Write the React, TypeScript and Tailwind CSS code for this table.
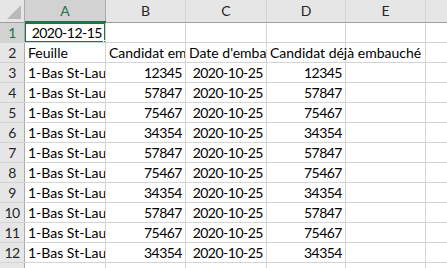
import React from 'react';

const cols = [
  { key: 'A', w: 'w-[81px]' },
  { key: 'B', w: 'w-[80px]' },
  { key: 'C', w: 'w-[81px]' },
  { key: 'D', w: 'w-[79px]' },
  { key: 'E', w: 'w-[80px]' },
];

const ids = [12345, 57847, 75467, 34354, 57847, 75467, 34354, 57847, 75467, 34354];

type Cell = { text: string; align?: 'left' | 'right'; overflow?: boolean };

const rows: Cell[][] = [
  [{ text: '2020-12-15', align: 'right' }, { text: '' }, { text: '' }, { text: '' }, { text: '' }],
  [
    { text: 'Feuille' },
    { text: 'Candidat embauché' },
    { text: "Date d'embauche" },
    { text: 'Candidat déjà embauché', overflow: true },
    { text: '' },
  ],
  ...ids.map((id) => [
    { text: '1-Bas St-Laurent' },
    { text: String(id), align: 'right' as const },
    { text: '2020-10-25', align: 'right' as const },
    { text: String(id), align: 'right' as const },
    { text: '' },
  ]),
  [{ text: '' }, { text: '' }, { text: '' }, { text: '' }, { text: '' }],
];

export default function App() {
  return (
    <div
      className="w-[447px] h-[268px] overflow-hidden bg-white text-black text-[14px] leading-none"
      style={{ fontFamily: 'Lato, "Open Sans", sans-serif' }}
    >
      {/* column headers */}
      <div className="flex h-[23px] bg-[#e6e6e6] border-b border-[#9e9e9e]">
        <div className="relative w-[25px] shrink-0 border-r border-[#ababab]">
          <svg className="absolute right-[3px] bottom-[3px]" width="14" height="14" viewBox="0 0 14 14">
            <polygon points="14,0 14,14 0,14" fill="#b9b9b9" />
          </svg>
        </div>
        {cols.map((c) => (
          <div
            key={c.key}
            className={
              c.key === 'A'
                ? 'relative shrink-0 w-[81px] flex items-center justify-center bg-[#d2d2d2] text-[#217346] border-r border-[#ababab]'
                : `shrink-0 ${c.w} flex items-center justify-center text-[#262626] border-r border-[#d4d4d4]`
            }
          >
            {c.key}
            {c.key === 'A' && <div className="absolute left-0 right-[-1px] bottom-[-1px] h-[2px] bg-[#217346]" />}
          </div>
        ))}
        <div className="flex-1" />
      </div>

      {rows.map((row, r) => (
        <div key={r} className="flex h-[20px] border-b border-[#d4d4d4]">
          <div
            className={
              r === 0
                ? 'w-[25px] shrink-0 flex items-center justify-center bg-[#d2d2d2] text-[#217346] border-r border-[#ababab] tracking-[-0.5px]'
                : 'w-[25px] shrink-0 flex items-center justify-center bg-[#e6e6e6] text-[#262626] border-r border-[#ababab] tracking-[-0.5px]'
            }
          >
            {r + 1 <= 12 ? r + 1 : ''}
          </div>
          {row.map((cell, c) => (
            <div
              key={c}
              className={`relative shrink-0 ${cols[c].w} flex items-center border-r border-[#d4d4d4] ${
                cell.overflow ? 'overflow-visible z-10' : 'overflow-hidden'
              } ${cell.align === 'right' ? 'justify-end pr-[3px] tracking-[-0.5px]' : 'justify-start pl-[3px]'}`}
            >
              <span className="whitespace-nowrap">{cell.text}</span>
              {r === 0 && c === 0 && (
                <>
                  <div className="absolute left-[-1px] top-[-1px] right-[-1px] bottom-[-1px] border-2 border-[#217346]" />
                  <div className="absolute right-[-4px] bottom-[-4px] w-[6px] h-[6px] bg-[#217346] border border-white" />
                </>
              )}
            </div>
          ))}
          <div className="flex-1" />
        </div>
      ))}
    </div>
  );
}
